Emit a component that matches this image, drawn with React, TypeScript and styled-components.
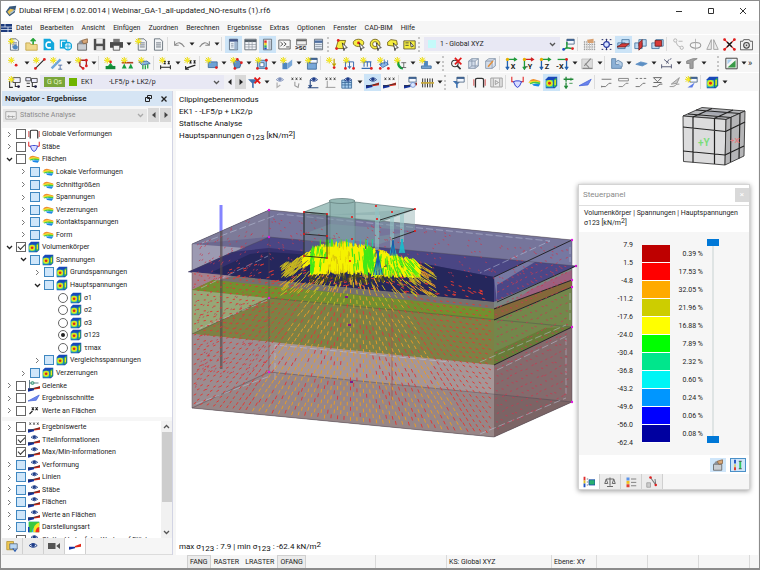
import React, { ReactNode } from "react";
import styled, { createGlobalStyle } from "styled-components";

const GlobalStyle = createGlobalStyle`
  * { box-sizing: border-box; }
  html, body, #root { height: 100%; margin: 0; }
  body { font-family: Roboto, "Noto Sans", sans-serif; font-size: 7px; line-height: 12px; color: #1d1d1d; }
  button, input, select { font: inherit; color: inherit; margin: 0; padding: 0; }
  svg { display: block; }
  sub, sup { font-size: 1em; line-height: 0; }
  sub { vertical-align: -2px; }
  sup { vertical-align: 2px; }
`;

/* ---------- window frame ---------- */

const Window = styled.div`
  display: flex;
  flex-direction: column;
  height: 100vh;
  background: #f6f6f6;
  border: 1px solid #8c8c8c;
  border-width: 1px 1px 2px 1px;
  overflow: hidden;
`;

const TitleBar = styled.header`
  display: flex;
  align-items: center;
  flex: 0 0 20px;
  padding-left: 4px;
  background: #fff;
`;

const Title = styled.h1`
  flex: 1;
  margin: 0 0 0 2px;
  font-size: 8px;
  font-weight: 400;
`;

const CaptionButton = styled.button`
  display: grid;
  place-items: center;
  width: 32px;
  height: 18px;
  border: 0;
  background: none;
`;

const MenuBar = styled.nav`
  display: flex;
  align-items: center;
  flex: 0 0 13px;
`;

const MenuLink = styled.button`
  padding: 0 4px;
  border: 0;
  background: none;
  white-space: nowrap;
`;

/* ---------- toolbars ---------- */

const ToolBar = styled.div`
  display: flex;
  align-items: center;
  flex: 0 0 19px;
  padding-left: 5px;
  border-top: 1px solid #fff;
  overflow: hidden;
`;

const ToolButton = styled.button<{ $on?: boolean }>`
  display: grid;
  place-items: center;
  flex: 0 0 17px;
  height: 17px;
  border: 0;
  background: ${(p) => (p.$on ? "#cce4f7" : "none")};
`;

const DropButton = styled.button`
  display: grid;
  place-items: center;
  flex: 0 0 8px;
  height: 17px;
  border: 0;
  background: none;
`;

const Separator = styled.span`
  flex: 0 0 4px;
  height: 14px;
  border-left: 1px solid #dcdcdc;
`;

const Handle = styled.span`
  flex: 0 0 6px;
  height: 15px;
  border-left: 2px dotted #c6c6c6;
`;

const Spacer = styled.span`
  flex: 0 0 9px;
`;

const More = styled.button`
  border: 0;
  background: none;
  font-size: 9px;
`;

const ComboBox = styled.label<{ $width: number }>`
  display: flex;
  align-items: center;
  flex: 0 1 ${(p) => p.$width}px;
  gap: 4px;
  height: 14px;
  padding: 0 4px;
  background: #e8e8f4;
`;

const Select = styled.select`
  flex: 1;
  min-width: 0;
  border: 0;
  background: none;
  appearance: none;
`;

const Swatch = styled.span<{ $color: string }>`
  width: 8px;
  height: 8px;
  background: ${(p) => p.$color};
`;

const Tag = styled.span`
  padding: 0 3px;
  background: #7aa63a;
  color: #e6f6c8;
  line-height: 10px;
  white-space: nowrap;
`;

const CaseName = styled.span`
  width: 24px;
`;

const StepButton = styled.button<{ $shade?: boolean }>`
  display: grid;
  place-items: center;
  flex: 0 0 11px;
  height: 14px;
  border: 0;
  background: ${(p) => (p.$shade ? "#d9d9d9" : "#f0f0f4")};
`;

/* ---------- navigator ---------- */

const Body = styled.main`
  display: flex;
  flex: 1;
  min-height: 0;
`;

const Navigator = styled.aside`
  display: flex;
  flex-direction: column;
  flex: 0 0 172px;
  min-width: 0;
  padding-left: 1px;
  border-right: 1px solid #d2d4e4;
`;

const PanelHead = styled.div`
  display: flex;
  align-items: center;
  flex: 0 0 15px;
  gap: 6px;
  padding: 0 4px 0 3px;
  background: #d6e5f4;
`;

const PanelTitle = styled.h2`
  flex: 1;
  margin: 0;
  font-size: 8px;
  font-weight: 600;
`;

const PlainButton = styled.button`
  display: grid;
  place-items: center;
  width: 9px;
  height: 11px;
  border: 0;
  background: none;
`;

const CaseBar = styled.div`
  display: flex;
  align-items: center;
  flex: 0 0 22px;
  gap: 1px;
  padding: 0 1px 4px 1px;
  color: #8b8b8b;
`;

const CaseBox = styled.label`
  display: flex;
  align-items: center;
  flex: 1;
  gap: 3px;
  height: 13px;
  padding: 0 3px 0 2px;
  background: #e6e6e6;
`;

const Tree = styled.div`
  display: grid;
  grid-auto-rows: 1fr;
  flex: 1;
  min-height: 0;
  min-width: 0;
  background: #fff;
`;

const LowerPane = styled.div`
  display: flex;
  flex: 0 0 117px;
  margin-top: 4px;
  overflow: hidden;
  background: #fff;
`;

const LowerTree = styled(Tree)`
  height: 125px;
`;

const ScrollBar = styled.div`
  display: flex;
  flex-direction: column;
  align-items: center;
  flex: 0 0 11px;
  background: #f1f1f1;
`;

const ScrollThumb = styled.div`
  width: 10px;
  height: 70px;
  margin-bottom: auto;
  background: #cdcdcd;
`;

const TreeRow = styled.div<{ $level: number }>`
  display: flex;
  align-items: center;
  min-width: 0;
  min-height: 0;
  padding-left: ${(p) => 2 + p.$level * 14}px;
  overflow: hidden;
`;

const Toggle = styled.button`
  display: grid;
  place-items: center;
  flex: 0 0 10px;
  height: 10px;
  margin-right: 2px;
  border: 0;
  background: none;
`;

const TreeLabel = styled.label`
  display: flex;
  align-items: center;
  gap: 2px;
  white-space: nowrap;
`;

const Check = styled.input<{ $partial?: boolean }>`
  display: grid;
  place-items: center;
  width: 10px;
  height: 10px;
  appearance: none;
  border: 1px solid ${(p) => (p.$partial ? "#3f87c0" : "#666")};
  background: ${(p) => (p.$partial ? "#cfe6fa" : "#fff")};
  &[type="radio"] { border-radius: 50%; }
  &[type="radio"]:checked::after {
    content: "";
    width: 4px;
    height: 4px;
    border-radius: 50%;
    background: #222;
  }
  &[type="checkbox"]:checked::after {
    content: "";
    width: 6px;
    height: 3px;
    margin-bottom: 2px;
    border: solid #333;
    border-width: 0 0 1px 1px;
    transform: rotate(-45deg);
  }
`;

const TabStrip = styled.div`
  display: flex;
  flex: 0 0 17px;
  border-bottom: 1px solid #dcdcdc;
`;

const Tab = styled.button<{ $active?: boolean }>`
  display: grid;
  place-items: center;
  flex: 0 0 21px;
  border: 0;
  border-right: 1px solid #d0d0d0;
  background: ${(p) => (p.$active ? "#fff" : "#ececec")};
`;

/* ---------- view and control panel ---------- */

const View = styled.section`
  position: relative;
  flex: 1;
  min-width: 0;
  margin-left: 3px;
  margin-right: 1px;
  background: #fff;
  overflow: hidden;
`;

const Scene = styled.svg`
  width: 100%;
  height: 100%;
`;

const Overlay = styled.div<{ $bottom?: boolean }>`
  position: absolute;
  left: 3px;
  ${(p) => (p.$bottom ? "bottom: 2px;" : "top: 3px;")}
  font-size: 8px;
  color: #111;
  p { margin: 0; }
`;

const Floating = styled.aside`
  position: absolute;
  top: 93px;
  right: 8px;
  display: flex;
  flex-direction: column;
  width: 172px;
  background: #fff;
  border: 1px solid #d4d4d4;
  box-shadow: 0 1px 5px rgba(0, 0, 0, 0.4);
`;

const FloatHead = styled.div`
  display: flex;
  align-items: center;
  justify-content: space-between;
  height: 21px;
  padding-left: 4px;
  border-bottom: 1px solid #dedede;
  color: #8a8a8a;
  font-size: 8px;
`;

const CloseBox = styled.button`
  width: 14px;
  height: 14px;
  border: 0;
  background: #d9d9d9;
  color: #fff;
  line-height: 12px;
`;

const FloatCaption = styled.div`
  height: 26px;
  padding: 2px 5px;
  line-height: 10px;
  white-space: nowrap;
`;

const Legend = styled.div`
  display: grid;
  grid-template-columns: 54px 37px 33px 1fr;
  height: 223px;
  padding-top: 4px;
  background: #f6f6f6;
`;

const Bounds = styled.ol`
  margin: 0;
  padding: 0;
  list-style: none;
  text-align: right;
  white-space: nowrap;
  li { height: 18px; line-height: 18px; }
`;

const Bands = styled.div`
  padding: 9px 0 0 9px;
`;

const Band = styled.div<{ $color: string }>`
  height: 18px;
  border-bottom: 1px solid #fff;
  background: ${(p) => p.$color};
`;

const Shares = styled(Bounds)`
  padding-top: 9px;
`;

const Sliders = styled.div`
  display: flex;
  flex-direction: column;
  padding: 3px 0 0 4px;
`;

const Range = styled.input`
  display: block;
  width: 12px;
  height: 102px;
  appearance: none;
  writing-mode: vertical-lr;
  direction: rtl;
  background: linear-gradient(#dfe4e4, #dfe4e4) center / 2px 100% no-repeat;
  &::-webkit-slider-thumb {
    appearance: none;
    width: 12px;
    height: 7px;
    background: #0078d7;
  }
`;

const FloatTools = styled.div`
  display: flex;
  align-items: center;
  justify-content: flex-end;
  gap: 4px;
  height: 19px;
  padding-right: 3px;
`;

const FloatTool = styled.button<{ $framed?: boolean }>`
  display: grid;
  place-items: center;
  width: 16px;
  height: 14px;
  border: 1px solid ${(p) => (p.$framed ? "#4a90c8" : "#cfe6fa")};
  background: #cfe6fa;
`;

const FloatTabs = styled(TabStrip)`
  flex: 0 0 15px;
  background: #f6f6f6;
  border: 0;
`;

/* ---------- status bar ---------- */

const StatusBar = styled.footer`
  display: grid;
  grid-template-columns: 188px 71px 105px 45px 51px 51px 51px 1fr;
  flex: 0 0 13px;
  padding-left: 186px;
`;

const StatusCell = styled.div`
  display: flex;
  align-items: center;
  padding-left: 2px;
  border-left: 1px solid #dadada;
  white-space: nowrap;
`;

const SnapCell = styled.div`
  display: flex;
`;

const Snap = styled.button<{ $on?: boolean }>`
  padding: 0 2px;
  border: 1px solid ${(p) => (p.$on ? "#d0d0d0" : "transparent")};
  border-bottom: 0;
  background: ${(p) => (p.$on ? "#ebebeb" : "none")};
`;

/* ---------- icons ---------- */

const Star = () => (
  <g>
    <path d="M4 0v8M0 4h8M1 1l6 6M7 1l-6 6" stroke="#e8d800" strokeWidth="1.2" />
    <circle cx="4" cy="4" r="1.6" fill="#f8ee20" />
  </g>
);
const Dot = ({ x, y, c = "#e02020" }: { x: number; y: number; c?: string }) => <circle cx={x} cy={y} r="1.7" fill={c} />;
const Eye = () => (
  <g>
    <path d="M4 4.5Q8.5 0 13 4.5Q8.5 8.5 4 4.5Z" fill="#e8edf8" stroke="#26458c" strokeWidth="1.1" />
    <circle cx="8.5" cy="4" r="2.1" fill="#1c3c88" />
  </g>
);
const Wedge = () => (
  <g>
    <path d="M0 11h8v2.500l-8 2Z" fill="#1230a0" />
    <path d="M16 8l-8 2.500v2l8-1Z" fill="#e02818" />
    <path d="M0 12.500L16 9.500" stroke="#333" />
  </g>
);
const Crosses = () => <path d="M2 2l2 3M4 2l-2 3M7 2l2 3M9 2l-2 3M12 2l2 3M14 2l-2 3" stroke="#333" strokeWidth="1" />;
const Arrow = ({ d, c }: { d: string; c: string }) => <path d={d} stroke={c} strokeWidth="1.6" fill="none" />;
const Axes = ({ a, b, c }: { a: string; b: string; c: string }) => (
  <g>
    <Arrow d="M2 3h12M11 1l3 2-3 2" c={a} />
    <Arrow d="M3 3v12M1 12l2 3 2-3" c={b} />
    <circle cx="3" cy="3" r="2" fill="#e8b000" />
    <text x="7" y="15" fontSize="9" fontWeight="700" fill="#222">{c}</text>
  </g>
);
const Doc = ({ x = 0 }: { x?: number }) => (
  <path d={`M${3 + x} 1h7l3 3v11h-10Z M${5 + x} 6h6M${5 + x} 8.500h6M${5 + x} 11h6`} fill="#f1f3f5" stroke="#59636e" />
);
const Win = () => (
  <g>
    <path d="M6 1.500h9v6H6Z" fill="#f4f8ff" stroke="#496281" />
    <path d="M6 1.500h9v2H6Z" fill="#2d5486" />
  </g>
);

const icons: Record<string, ReactNode> = {
  newModel: <><Doc /><path d="M6 10l3-2 3 2v3l-3 1-3-1Z" fill="#4d86c0" /><Star /></>,
  open: <><path d="M1 6h5l1 2h8v7H1Z" fill="#efd88c" stroke="#c0a040" /><path d="M10 8V1M7 4l3-3 3 3" stroke="#27a33a" strokeWidth="2" fill="none" /></>,
  dlubal: <><path d="M2 1h8l5 5v9H2Z" fill="#12a8dc" /><path d="M11 5.500Q5 4 5 8.500T11 12" stroke="#fff" strokeWidth="2" fill="none" /></>,
  cloud: <><path d="M1 2h9v11H1Z" fill="#12a8dc" /><path d="M3 4h5M3 4v7" stroke="#fff" strokeWidth="1.500" /><circle cx="11" cy="10" r="4.500" fill="#d5f1fb" stroke="#12a8dc" strokeWidth="1.500" /><path d="M7 10h8M11 6v8" stroke="#12a8dc" /></>,
  archive: <><path d="M2 7h11v8H2Z" fill="#c9cdd2" stroke="#555" /><path d="M2 7l3-4h8v4Z" fill="#89919b" /><path d="M7 3l7-2v5l-5 1Z" fill="#d8a878" stroke="#846040" /></>,
  save: <><path d="M1 1h14v14H1Z" fill="#4f4f4f" /><path d="M4 1h8v6H4Z" fill="#eee" /><path d="M4 10h8v5H4Z" fill="#ddd" /></>,
  print: <><path d="M4 1h8v4H4Z" fill="#777" /><path d="M0 5h16v7H0Z" fill="#4c4c4c" /><path d="M4 9h8v6H4Z" fill="#f0f0f0" stroke="#454545" /></>,
  newDoc: <><Doc x={1} /><Star /></>,
  doc: <Doc />,
  undo: <path d="M2 4v5h5M2 9q6-7 12 2" stroke="#888" strokeWidth="1.300" fill="none" />,
  redo: <path d="M14 4v5H9M14 9q-6-7-12 2" stroke="#888" strokeWidth="1.300" fill="none" />,
  panel: <><path d="M3 1.500h10v13H3Z" fill="#e8f0f8" stroke="#4f6070" /><path d="M3 1.500h10v3H3Z" fill="#3f5488" /><path d="M9 5h4v9H9Z" fill="#9cb4d0" /><path d="M5 7h3M5 9h3M5 11h3" stroke="#8a95a5" /></>,
  table: <><path d="M1 1.500h14v13H1Z" fill="#f2f4f8" stroke="#56606a" /><path d="M1 2h14v3H1Z" fill="#56606a" /><path d="M1 8h14M1 11h14M6 4v10M10 4v10" stroke="#8a929a" strokeWidth=".8" /></>,
  legend: <><path d="M3 1.500h10v13H3Z" fill="#eef2f8" stroke="#56606a" /><path d="M4 3h3v3H4Z" fill="#e03030" /><path d="M4 6h3v3H4Z" fill="#eed020" /><path d="M4 9h3v3H4Z" fill="#30b060" /><path d="M4 12h3v2H4Z" fill="#2050d0" /><path d="M9 3h3v11H9Z" fill="#b0bccc" /></>,
  console: <><path d="M1 2.500h14v11H1Z" fill="#f8f8f8" stroke="#4a4a4a" /><path d="M3 5l3 2.500L3 10M7 5l3 2.500L7 10M10 11h4" stroke="#333" fill="none" /></>,
  script: <><path d="M2 1.500h12v7H2Z" fill="#eee" stroke="#666" /><path d="M2 2h12v2H2Z" fill="#666" /><text x="0" y="15" fontSize="9" fontWeight="700" fill="#333">&gt;sc</text></>,
  list: <><path d="M3 1.500h10v13H3Z" fill="#dfe7f0" stroke="#56606a" /><path d="M3 3h10v3H3Z" fill="#4f6fa0" /><path d="M4 8h8M4 10.500h8M4 13h8" stroke="#8a95a5" /></>,
  selA: <><path d="M4 3h9l-3 10H1Z" fill="#f6ee40" stroke="#6b5a10" /><Dot x={4} y={3} /><Dot x={2} y={13} /><path d="M9 6l6 6-3 .5-1 3Z" fill="#fff" stroke="#222" /></>,
  selB: <><ellipse cx="8" cy="6" rx="6.500" ry="4.500" fill="#f6ee40" stroke="#6b5a10" /><Dot x={8} y={6} /><path d="M9 6l6 6-3 .5-1 3Z" fill="#fff" stroke="#222" /></>,
  selC: <><circle cx="7.500" cy="7.500" r="6" fill="#f6ee40" stroke="#6b5a10" /><circle cx="7.500" cy="7.500" r="3" fill="#fff" stroke="#6b5a10" /><path d="M9 6l6 6-3 .5-1 3Z" fill="#fff" stroke="#222" /></>,
  selD: <><path d="M2 5l4-3 7 1 1 5-4 2-8-1Z" fill="#f6ee40" stroke="#6b5a10" /><path d="M9 6l6 6-3 .5-1 3Z" fill="#fff" stroke="#222" /></>,
  selE: <><path d="M1 3.500h14v10H1Z" fill="#f6ee40" stroke="#55502a" /><path d="M3 6h4M3 9h4M9 5l4 5-3 1Z" stroke="#333" fill="#fff" /></>,
  csys: <><Win /><path d="M6 12V5M6 12l6 1M6 12l-4 2" stroke="#1f9a3a" strokeWidth="1.800" /><Dot x={13} y={13} /><Dot x={2} y={14} c="#2050c0" /></>,
  gridHand: <><path d="M2 4v11M5 4v11M8 4v11M11 4v11M14 4v11M1 5h14M1 8h14M1 11h14M1 14h14" stroke="#8a8a8a" strokeWidth=".9" strokeDasharray="1.500 1" /><path d="M5 2l8-1v5H6Z" fill="#d8a070" /></>,
  snap: <><path d="M2 2h2M7 2h2M12 2h2M2 14h2M7 14h2M12 14h2M1 8h14M8 1v14" stroke="#28306a" strokeWidth="1.200" /><circle cx="8" cy="8" r="3.500" fill="#d8e4ff" stroke="#2838a0" strokeWidth="1.400" /></>,
  planeA: <><path d="M1 6h9v7H1ZM6 2h9v8H6Z" fill="#bcd9f2" stroke="#3f709c" /><path d="M0 11l6-4h9l-5 4Z" fill="#d83a38" stroke="#702020" /></>,
  planeB: <><path d="M1 6h9v7H1ZM6 2h9v8H6Z" fill="#bcd9f2" stroke="#3f709c" /><path d="M6 6l4-4v9l-4 4Z" fill="#d83a38" stroke="#702020" /></>,
  planeC: <><path d="M1 6h9v7H1ZM6 2h9v8H6Z" fill="#bcd9f2" stroke="#3f709c" /><path d="M5 3h8v7H5Z" fill="#d83a38" stroke="#702020" /></>,
  move: <><circle cx="4" cy="3" r="2" fill="none" stroke="#aaa" /><circle cx="12" cy="12" r="2" fill="none" stroke="#aaa" /><path d="M5 5q1 5 5 6M8 4h5" stroke="#aaa" fill="none" /></>,
  rotate: <><ellipse cx="8" cy="9" rx="6.500" ry="3.500" fill="none" stroke="#999" strokeWidth="1.300" /><path d="M8 1v14" stroke="#aaa" /></>,
  mirror: <path d="M6.500 2v12H1ZM9.500 2v12H15Z" fill="#eee" stroke="#999" />,
  erase: <><path d="M1 1l14 14M15 1L1 15" stroke="#d82020" strokeWidth="1.300" /><path d="M5 5l6 6M11 5l-6 6" stroke="#111" strokeWidth="1.600" /><Dot x={2} y={2} /><Dot x={14} y={2} /><Dot x={2} y={14} /><Dot x={14} y={14} /></>,
  camera: <><path d="M0.500 4h3l1-2h7l1 2h3v10.500H.5Z" fill="#f2f2f2" stroke="#444" /><circle cx="8" cy="9" r="3.500" fill="#ddd" stroke="#444" strokeWidth="1.300" /><circle cx="8" cy="9" r="1" fill="#444" /></>,

  node: <><Star /><Dot x={10} y={10} /></>,
  line: <><path d="M3 14L14 3" stroke="#222" strokeWidth="1.300" /><Dot x={3} y={14} /><Dot x={14} y={3} /><Star /></>,
  member: <><path d="M2 14L13 3" stroke="#6fa6da" strokeWidth="3" /><path d="M10 10h5M10 15h5M12.500 10v5" stroke="#3b5f9a" /><Star /></>,
  poly: <><path d="M6 4h8v7M6 4v7l4 3" stroke="#a02020" strokeWidth="1.600" fill="none" /><Dot x={14} y={4} /><Dot x={14} y={11} /><Dot x={10} y={14} /><Star /></>,
  support: <><path d="M8 7l3 4H5Z" fill="#17a040" /><path d="M2 11h12v4H2Z" fill="#128a38" /><Dot x={8} y={6} /><Star /></>,
  support2: <><path d="M1 7h14" stroke="#b04020" strokeWidth="2" /><path d="M4 8l3 6H1ZM12 8l3 6H9Z" fill="#17a040" /><Star /></>,
  support3: <><path d="M1 6l10-1 4 3-10 2Z" fill="#8cb8e4" stroke="#3b6898" /><path d="M6 10v5M9 10v5M12 9v5" stroke="#17a040" strokeWidth="1.500" /><Star /></>,
  dim: <><path d="M2 10v5M14 10v5M2 12.500h12M6 5l2 4M8 5l-2 4M11 5l2 4M13 5l-2 4" stroke="#222" strokeWidth="1.300" /><Star /></>,
  dimX: <><path d="M2 14L14 10M2 11v4h4M7 4l2 4M9 4l-2 4M12 4l2 4M14 4l-2 4" stroke="#222" fill="none" strokeWidth="1.300" /><Star /></>,
  surf: <><path d="M4 6h11v7H4Z" fill="#6ea2d4" stroke="#386696" /><Dot x={14} y={13} /><Star /></>,
  solid: <><path d="M4 6l5-3 5 4-2 6-6 1Z" fill="#5e92c6" stroke="#2d5988" /><Dot x={9} y={3} /><Dot x={14} y={7} /><Dot x={6} y={14} /><Star /></>,
  opening: <><path d="M3 4h11v10H3Z" fill="#9cc4ea" stroke="#386696" /><path d="M6 7h5v5H6Z" fill="#fff" stroke="#386696" /><Dot x={3} y={14} /><Dot x={14} y={4} /><Dot x={14} y={14} /><Star /></>,
  joint: <><path d="M3 7h6v8H3Z" fill="#4d86c0" /><path d="M9 8l6-5v7l-6 5Z" fill="#79a8d8" /><Star /></>,
  setBox: <><path d="M3 7h11v8H3Z" fill="#79a8d8" stroke="#386696" /><Win /><Star /></>,
  load: <><path d="M10 2v9M8 8l2 3 2-3" stroke="#c0a000" strokeWidth="1.500" fill="none" /><Dot x={10} y={13} /><Star /></>,
  loadA: <><path d="M3 14V6h10v8M8 6v8M6 11l2 3 2-3" stroke="#3b6cb0" fill="none" strokeWidth="1.200" /><Dot x={3} y={14} /><Dot x={13} y={14} /><Star /></>,
  loadB: <><path d="M3 6h11M5 6v6M9 6v6M13 6v6M2 14h12" stroke="#3b6cb0" strokeWidth="1.300" /><Dot x={14} y={14} /><Star /></>,
  loadC: <><path d="M3 9l8-3 3 3-7 4Z" fill="#8cb8e4" stroke="#3b6cb0" /><path d="M5 4v6M9 3v6M13 4v6" stroke="#3b6cb0" /><Dot x={4} y={14} /><Dot x={14} y={14} /><Star /></>,
  loadD: <><path d="M5 5q0 9 6 9" stroke="#17a040" strokeWidth="3" fill="none" /><path d="M9 7h6M12 7v6M9 13h6" stroke="#555" /><Star /></>,
  loadE: <><path d="M3 11h12v3H3Z" fill="#79a8d8" stroke="#386696" /><path d="M6 5h5v6H6Z" fill="#4d86c0" /><Star /></>,
  find: <><circle cx="6" cy="8" r="4" fill="none" stroke="#333" strokeWidth="1.300" /><path d="M9 11l4 4" stroke="#333" strokeWidth="2" /><path d="M6 1l8 8M14 1L6 9" stroke="#e01818" strokeWidth="2" /></>,
  wire: <path d="M2 5h8v9H2ZM2 5l4-3h8l-4 3M14 2v9l-4 3M6 2v9M2 14l4-3h8" fill="#d2dcea" stroke="#8292a8" />,
  wireEdit: <><path d="M2 5h8v9H2ZM2 5l4-3h8l-4 3M14 2v9l-4 3" fill="#d2dcea" stroke="#8292a8" /><path d="M5 12l6-7" stroke="#e09040" strokeWidth="2" /></>,
  axX: <Axes a="#1f9a3a" b="#2060b0" c="X" />,
  axY: <><Axes a="#d02020" b="#1f9a3a" c="Y" /><path d="M4 12h3" stroke="#222" /></>,
  axZ: <Axes a="#1f9a3a" b="#2060b0" c="Z" />,
  axMX: <><Arrow d="M2 3h11" c="#1f9a3a" /><Arrow d="M13 3v12M11 12l2 3 2-3" c="#2060b0" /><Dot x={13} y={3} /><text x="0" y="15" fontSize="9" fontWeight="700" fill="#222">-X</text></>,
  edit: <><path d="M1 2.500h13v12H1Z" fill="#ddd" stroke="#bbb" /><path d="M4 11l8-9M2 14h12M5 8l5 5" stroke="#888" strokeWidth="1.300" /></>,
  block: <><path d="M2 2h5v7h7v5H2Z" fill="#8bb0d6" stroke="#5a80a8" /><path d="M7 6l3-2 5 3v5" fill="#b8d0e8" stroke="#5a80a8" /></>,
  plate: <path d="M1 9l6-3 8 2-6 3Z" fill="#5c8fc4" stroke="#5c8fc4" />,
  dimGray: <path d="M2 9v5M14 9v5M2 12h12M5 3l6 5M11 3L8 8M12 3l2-1" stroke="#5a5f78" strokeWidth="1.200" />,
  beam: <path d="M2 5l8-3h5l-5 3v9H6V8H2Z" fill="#a0a0a0" stroke="#808080" />,
  chart: <><path d="M1 1.500h14v13H1Z" fill="#f5f5f5" stroke="#444" strokeWidth="1.200" /><path d="M3 13L13 4v9Z" fill="#3a9a48" /><path d="M3 3h6L3 9Z" fill="#a9cff0" /></>,

  caseNew: <><path d="M6 2h9v6H6Z" fill="#eef" stroke="#333" /><path d="M9 8v5h5M2 6v8h4" stroke="#333" strokeWidth="1.300" fill="none" /><Dot x={13} y={13} c="#224" /><Star /></>,
  caseAll: <><path d="M1 2h6v4H1ZM8 3h7v5H8Z" fill="#eef" stroke="#333" /><path d="M9 8v5h5M2 9h4M2 13h4" stroke="#333" strokeWidth="1.300" fill="none" /><Dot x={13} y={13} c="#224" /></>,
  filterX: <><path d="M0 4h11l-4 5v6l-2-1V9Z" fill="#3f72b0" /><path d="M8 2l7 7M15 2L8 9" stroke="#e01818" strokeWidth="2.200" /></>,
  eyeA: <g opacity=".55"><Eye /><path d="M5 8v6l4-3" stroke="#777" strokeWidth="1.500" fill="none" /></g>,
  eyeB: <><Crosses /><path d="M6 7v5l4 2 1-5" stroke="#999" strokeWidth="1.300" fill="none" /></>,
  eyeC: <><Eye /><path d="M4 5v9M1 14.500h13M2 11l2 3 2-3" stroke="#2a4a80" fill="none" strokeWidth="1.300" /></>,
  eyeD: <><Crosses /><path d="M4 6v8M2 14h12" stroke="#888" fill="none" /></>,
  eyeGrid: <><path d="M1 5h12v10H1Z" fill="#a9cff0" stroke="#386696" /><path d="M1 8h12M1 11h12M5 5v10M9 5v10" stroke="#386696" /><Eye /></>,
  eyeWedge: <><Wedge /><Eye /></>,
  xWedge: <><Wedge /><Crosses /></>,
  wedge: <><path d="M0 9h8v2l-8 2Z" fill="#1230a0" /><path d="M16 5L8 8v2l8-1Z" fill="#e02818" /></>,
  winWedge: <><Wedge /><Win /><circle cx="11" cy="11" r="3" fill="#dce8ff" stroke="#6a90d8" /></>,
  grid3: <><path d="M2 3v11M5 3v11M8 3v11M11 3v11M14 3v11" stroke="#333" strokeWidth="1.200" /><path d="M0 8.500h16" stroke="#c8a838" strokeWidth="2" /></>,
  filterWin: <><path d="M1 6h10l-4 4v5l-2-1v-4Z" fill="#3f72b0" /><Win /></>,
  frame: <><path d="M3 14V5q0-2 2-2h6q2 0 2 2v9" stroke="#333" strokeWidth="1.600" fill="none" /><path d="M1 12V4M15 12V4" stroke="#d03030" /></>,
  film: <path d="M1 2.500h14v11H1ZM4 3v10M12 3v10M6.500 5.500l4 2.500-4 2.500Z" fill="#eee" stroke="#909090" />,
  uCurve: <><path d="M1 1v6h3M15 1v6h-3" stroke="#e02020" strokeWidth="1.300" fill="none" /><path d="M3 7q5 14 10 0l-3-1H6Z" fill="#d9dcff" stroke="#3040d0" strokeWidth="1.200" /></>,
  rainbow: <><path d="M1 7Q4 3 8 4l7 2v2L8 6Z" fill="#f09030" /><path d="M0 8Q6 4 15 7v1H8L4 9Z" fill="#f4e020" /><path d="M2 9q6-3 13-1v2l-8-1-4 1Z" fill="#40c850" /><path d="M5 10q5-1 10 0l-2 3-6-1Z" fill="#1888e8" /></>,
  cube: <><path d="M1 4l3-3h11v11l-3 3H1Z" fill="#1848b8" /><path d="M1 5h9v9H1Z" fill="#28b8b0" /><circle cx="5.500" cy="9" r="4" fill="#d8e820" /><circle cx="5.500" cy="9" r="1.800" fill="#e02818" /><path d="M11 5l3-3v10l-3 2Z" fill="#38c848" /><path d="M12.500 5v6" stroke="#f0e820" strokeWidth="1.600" /></>,
  plus: <><path d="M5 1v6M2 4h6M8 4h6M5 8v6M3 12l2 3 2-3" stroke="#228838" strokeWidth="1.600" fill="none" /><path d="M11 2v4M9 9h4" stroke="#228838" /></>,
  section: <path d="M0 12L15 4l-4 7Z" fill="#6b85ee" stroke="#4b68d8" />,
  diagA: <path d="M2 4h12M2 13h5l4-4h3M2 12v2" stroke="#777" strokeWidth="1.200" fill="none" />,
  diagB: <path d="M2 3h12v3H2ZM2 13h5l4-4h3" stroke="#888" strokeWidth="1.200" fill="none" />,
  diagC: <path d="M2 3h3M7 3h3M12 3h3M2 13h5l4-4h3" stroke="#777" strokeWidth="1.200" fill="none" />,
  diagD: <path d="M3 2h10M3 2l5 5 5-5M3 8h10M2 13h5l4-3h3" stroke="#666" strokeWidth="1.200" fill="none" />,
  diagE: <path d="M4 10l10-8-3 7ZM2 13h5l4-3h3" stroke="#999" strokeWidth="1.200" fill="#ccc" />,
  diagF: <><Win /><path d="M3 14l9-6-3 6Z" fill="#5b7be8" /><Star /></>,
  hinge: <><path d="M2 0v11M2 4h12" stroke="#356" /><circle cx="6" cy="4" r="2" fill="#9fd0c0" stroke="#286" /><Wedge /></>,
  valXX: <path d="M5 3l3 4M8 3L5 7M10 3l3 4M13 3l-3 4M2 12L6 8" stroke="#222" strokeWidth="1.500" />,
  render: <><path d="M1 1h14v14H1Z" fill="#28b8e8" /><path d="M1 1h14v5Q6 7 5 15H1Z" fill="#38c840" /><path d="M15 2v13H7Q7 4 15 2Z" fill="#f4e820" /><path d="M15 8v7h-5Q10 9 15 8Z" fill="#f03020" /><path d="M1 15V8" stroke="#183fc0" strokeWidth="2" /></>,
  image: <><path d="M1 3.500h14v10H1Z" fill="#eee" stroke="#999" /><path d="M3 10h10M5 12V8M10 12V9" stroke="#999" /></>,
  folder: <><path d="M1 2h9v11H1Z" fill="#f0c850" stroke="#b09030" /><path d="M5 5h10v7H5Z" fill="#b9d6f2" stroke="#567" /><path d="M9 11l3 4 2-3" stroke="#3060b0" strokeWidth="1.600" fill="none" /></>,
  eye: <g transform="translate(-2 2) scale(1.200)"><Eye /></g>,
  video: <path d="M0 4h10v8H0ZM11 8l5-4v8Z" fill="#555" />,
  scale: <path d="M8 2v11M4 14h8M3 4h10M3 4L1 10h4ZM13 4l-2 6h4Z" fill="none" stroke="#666" strokeWidth="1.300" />,
  bars: <><path d="M2 2h4v4H2Z" fill="#5b93e8" /><path d="M2 6.500h4v4H2Z" fill="#f0c020" /><path d="M2 11h4v4H2Z" fill="#e04030" /><path d="M8 4h7M8 8.500h7M8 13h7" stroke="#777" strokeWidth="1.200" /></>,
  legendCube: <><path d="M2 1v5" stroke="#e03030" strokeWidth="2.500" /><path d="M2 6v4" stroke="#e0c020" strokeWidth="2.500" /><path d="M2 10v5" stroke="#2050c0" strokeWidth="2.500" /><path d="M5 4h2M5 8h2M5 12h2" stroke="#555" /><path d="M8 5h8v7H8Z" fill="#28b070" stroke="#1840b0" /></>,
  probe: <><path d="M1 9h5v6H1Z" fill="#ccc" stroke="#999" /><path d="M6 2l7 10M12 4l1 8" stroke="#777" strokeWidth="1.400" /><Dot x={6} y={2} /><Dot x={13} y={12} /></>,
  gauges: <><path d="M4 1v5" stroke="#2050c0" strokeWidth="2.500" /><path d="M4 7v4" stroke="#e0c020" strokeWidth="1.500" /><path d="M4 11v4" stroke="#e03020" strokeWidth="2.500" /><path d="M11 3v10" stroke="#30c860" strokeWidth="2.500" /><path d="M9 3h4M9 13h4" stroke="#333" /></>,
  logo: <><path d="M1 9l5-7 9-1-2 9-7 5Z" fill="#39597c" /><path d="M3 9l4-4 5 1-2 4-4 3Z" fill="#e6c258" /><path d="M7 11l6-4" stroke="#a8c4dc" strokeWidth="1.500" /></>,
};

const Icon = ({ name, size = 14 }: { name: string; size?: number }) => (
  <svg width={size} height={size} viewBox="0 0 16 16" fill="none" aria-hidden="true">{icons[name]}</svg>
);

const Caret = ({ dir, color = "#222" }: { dir: "down" | "left" | "right"; color?: string }) => (
  <svg width="6" height="6" viewBox="0 0 6 6" aria-hidden="true">
    <path d={dir === "down" ? "M.5 1.500h5l-2.500 3Z" : dir === "left" ? "M4.500 0v6L1 3Z" : "M1.500 0v6L5 3Z"} fill={color} />
  </svg>
);

const Chevron = ({ dir, color = "#555" }: { dir: "down" | "right" | "up"; color?: string }) => (
  <svg width="7" height="7" viewBox="0 0 7 7" fill="none" aria-hidden="true">
    <path
      d={dir === "down" ? "M1 2L3.500 4.500 6 2" : dir === "up" ? "M1 5L3.500 2.500 6 5" : "M2 1L4.500 3.500 2 6"}
      stroke={color}
      strokeWidth={dir === "right" ? 1 : 1.3}
    />
  </svg>
);

/* "v" drop arrow, "|" separator, ":" drag handle, "_" spacer, "*" marks an active tool */
const Tools = ({ spec }: { spec: string }) => (
  <>
    {spec.split(" ").map((item, i) => {
      if (item === "v") return <DropButton key={i} aria-label="Mehr"><Caret dir="down" /></DropButton>;
      if (item === "|") return <Separator key={i} />;
      if (item === ":") return <Handle key={i} />;
      if (item === "_") return <Spacer key={i} />;
      const name = item.replace("*", "");
      return <ToolButton key={i} $on={item.endsWith("*")} aria-label={name}><Icon name={name} size={13} /></ToolButton>;
    })}
  </>
);

/* ---------- tree data ---------- */

type Mark = "off" | "on" | "partial" | "radio" | "radioOn";
type Row = { level: number; open?: boolean; leaf?: boolean; mark: Mark; icon: string; text: string };
const row = (level: number, mark: Mark, icon: string, text: string, extra: Partial<Row> = {}): Row => ({ level, mark, icon, text, ...extra });
const leaf = { leaf: true };
const open = { open: true };

const resultRows: Row[] = [
  row(0, "off", "frame", "Globale Verformungen"),
  row(0, "off", "uCurve", "Stäbe"),
  row(0, "off", "rainbow", "Flächen", open),
  row(1, "partial", "rainbow", "Lokale Verformungen"),
  row(1, "partial", "rainbow", "Schnittgrößen"),
  row(1, "partial", "rainbow", "Spannungen"),
  row(1, "partial", "rainbow", "Verzerrungen"),
  row(1, "partial", "rainbow", "Kontaktspannungen"),
  row(1, "partial", "rainbow", "Form"),
  row(0, "on", "cube", "Volumenkörper", open),
  row(1, "partial", "cube", "Spannungen", open),
  row(2, "partial", "cube", "Grundspannungen"),
  row(2, "partial", "cube", "Hauptspannungen", open),
  row(3, "radio", "cube", "σ1", leaf),
  row(3, "radio", "cube", "σ2", leaf),
  row(3, "radio", "cube", "σ3", leaf),
  row(3, "radioOn", "cube", "σ123", leaf),
  row(3, "radio", "cube", "τmax", leaf),
  row(2, "partial", "cube", "Vergleichsspannungen"),
  row(1, "partial", "cube", "Verzerrungen"),
  row(0, "off", "hinge", "Gelenke"),
  row(0, "off", "section", "Ergebnisschnitte"),
  row(0, "off", "valXX", "Werte an Flächen"),
];

const displayRows: Row[] = [
  row(0, "off", "xWedge", "Ergebniswerte"),
  row(0, "on", "eyeWedge", "Titelinformationen", leaf),
  row(0, "on", "eyeWedge", "Max/Min-Informationen", leaf),
  row(0, "partial", "eyeWedge", "Verformung"),
  row(0, "partial", "eyeWedge", "Linien"),
  row(0, "partial", "eyeWedge", "Stäbe"),
  row(0, "partial", "eyeWedge", "Flächen"),
  row(0, "partial", "eyeWedge", "Werte an Flächen"),
  row(0, "partial", "render", "Darstellungsart"),
  row(0, "off", "eyeWedge", "Glatter Verlauf der Werte auf Flächen", leaf),
];

const Rows = ({ rows }: { rows: Row[] }) => (
  <>
    {rows.map((r, i) => (
      <TreeRow key={i} $level={r.level}>
        <Toggle aria-label={r.leaf ? undefined : "Aufklappen"}>
          {!r.leaf && <Chevron dir={r.open ? "down" : "right"} color={r.open ? "#222" : "#777"} />}
        </Toggle>
        <TreeLabel>
          <Check
            type={r.mark.startsWith("radio") ? "radio" : "checkbox"}
            name={r.mark.startsWith("radio") ? "stress" : undefined}
            $partial={r.mark === "partial"}
            defaultChecked={r.mark === "on" || r.mark === "radioOn"}
          />
          <Icon name={r.icon} size={12} />
          {r.text}
        </TreeLabel>
      </TreeRow>
    ))}
  </>
);

/* ---------- soil model ---------- */

let seed = 7;
const rnd = () => {
  seed = (seed * 16807) % 2147483647;
  return seed / 2147483647;
};
const n = (v: number) => v.toFixed(1);

const buildVectors = () => {
  const out: Record<string, string> = { faint: "", red: "", orange: "", gold: "", dark: "", core: "", yellow: "", green: "", cyan: "", blue: "" };
  const seg = (key: string, x: number, y: number, dx: number, dy: number) => {
    out[key] += `M${n(x - dx / 2)} ${n(y - dy / 2)}l${n(dx)} ${n(dy)}`;
  };
  for (let r = 0; r < 27; r++) {
    for (let c = 0; c < 46; c++) {
      const u = (c + (r % 2) / 2) / 46;
      const top = 274 + u * 32;
      const bottom = 408 + u * 28;
      const x = 195 + u * 298;
      const y = top + ((bottom - top) * (r + rnd() * 0.3)) / 27;
      const side = (x - 352) / (34 + (y - 262) * 0.55);
      const away = Math.abs(side);
      const len = away < 1 ? 3.8 : Math.max(1.6, 3.8 - away * 0.7);
      const ang = Math.atan2(y - 245, (x - 352) * 0.9) + (away > 1.2 ? (side > 0 ? -0.3 : 0.3) : 0);
      const key = away < 1 && y < 305 ? (rnd() < 0.6 ? "gold" : "orange") : away < 0.9 ? (rnd() < 0.7 ? "orange" : "red") : "red";
      seg(key, x, y, Math.cos(ang) * len, Math.sin(ang) * len);
    }
  }
  for (let i = 0; i < 220; i++) {
    const u = rnd();
    seg("faint", 194 + u * 74, 244 - u * 34 + rnd() * 155, 1.5, -1);
  }
  for (let r = 0; r < 20; r++) {
    for (let c = 0; c < 15; c++) {
      const u = (c + rnd() * 0.5) / 15;
      seg("faint", 496 + u * 74, 284 - u * 37 + r * 7.6 + rnd() * 2, 2, r % 2 ? -1 : 0.6);
    }
  }
  for (let i = 0; i < 200; i++) {
    const u = rnd();
    seg("faint", 270 + u * 290, 216 + u * 27 + rnd() * 45, 1.5, 0.6);
  }
  for (let i = 0; i < 110; i++) {
    const x = 225 + rnd() * 260;
    seg("red", x, 261 + (x - 225) * 0.09 + rnd() * 16, 3, x < 352 ? -1 : 1);
  }
  for (let i = 0; i < 300; i++) {
    const x = 283 + rnd() * 150;
    const dx = (x - 352) * 0.1;
    const far = Math.abs(x - 352) / 80;
    seg(rnd() < 0.5 ? "orange" : "gold", x, 256 + far * 8 + rnd() * 32, dx, 5);
  }
  for (let i = 0; i < 90; i++) {
    const t = rnd();
    seg(t > 0.7 ? "yellow" : "gold", 284 + t * 28, 266 - t * 16 + rnd() * 12, 6, -5);
  }
  for (let i = 0; i < 1100; i++) {
    const x = 311 + rnd() * 62;
    const edge = Math.abs((x - 342) / 31);
    const y = 245 + edge * 5 + rnd() * (25 - edge * 4);
    const k = rnd();
    const middle = Math.abs(x - 338) < 12;
    const key = x < 314 || x > 364 ? (k < 0.5 ? "green" : "yellow") : middle ? (k < 0.75 ? "core" : "yellow") : k < 0.82 ? "yellow" : k < 0.96 ? "core" : "green";
    seg(key, x, y, (x - 342) * 0.05, 7 + rnd() * 3);
  }
  for (let i = 0; i < 620; i++) {
    const t = rnd();
    const x = 370 + t * 48;
    const y = 250 + t * 12 + rnd() * (25 - t * 12);
    const k = rnd();
    seg(k < 0.62 ? "yellow" : k < 0.74 ? "green" : k < 0.84 ? "orange" : k < 0.96 ? "gold" : "dark", x, y, -3 + t * 9, 6);
  }
  for (let i = 0; i < 80; i++) seg("dark", 310 + rnd() * 90, 275 + rnd() * 7, (rnd() - 0.5) * 2, 4);
  for (let i = 0; i < 7; i++) {
    seg(i % 2 ? "cyan" : "blue", 378 + (i - 3) * 0.6, 263, (i - 3) * 1.8, 24);
    seg(i % 2 ? "blue" : "cyan", 393 + (i - 3) * 0.5, 248, (i - 3) * 1.2, 15);
    seg("cyan", 402 + (i - 3) * 0.4, 246, (i - 3), 14);
  }
  for (let i = 0; i < 20; i++) seg(i % 3 ? "green" : "cyan", 318 + rnd() * 55, 243, 0, 7);
  return out;
};

const vectors = buildVectors();
const vectorColors: Record<string, string> = {
  faint: "#c83850", red: "#e03a34", orange: "#e89a28", gold: "#c8b820", dark: "#4b4a1c",
  core: "#dccb08", yellow: "#f6f200", green: "#40e818", cyan: "#20b8c8", blue: "#1c58a8",
};

const nodes: [number, number][] = [[304, 212], [327, 214], [304, 234], [327, 236], [304, 256], [327, 258], [352, 217], [377, 219], [415, 209], [415, 231], [352, 239], [350, 261], [376, 206], [392, 212]];
const corners: [number, number][] = [[269, 210], [572, 240], [576, 266], [572, 280], [572, 287], [572, 327], [572, 402], [269, 372], [269, 237], [269, 298]];

const Model = () => (
  <Scene viewBox="176 91 582 464" preserveAspectRatio="xMidYMid meet" role="img" aria-label="Bodenmodell mit Hauptspannungen">
    <rect x="219.500" y="205" width="3" height="165" fill="#8484ff" />
    {/* rear walls of the soil block */}
    <path d="M192 244L269 210V372L192 408Z" fill="#9186a0" />
    <path d="M269 210L572 240V402L494 437 192 408 269 372Z" fill="#a29293" />
    <path d="M192 244L269 210 572 240 494 277Z" fill="#76759b" />
    <path d="M192 244L269 210V237L192 272Z" fill="#7d7b99" />
    <path d="M192 244L269 237 494 260V302L192 272Z" fill="#6c6990" />
    <path d="M192 244L245 248 192 272Z" fill="#9c9ab2" />
    {/* blue layer */}
    <path d="M188 272L269 237 576 266 497 302Z" fill="#4a4684" />
    <path d="M188 272L232 252 269 248 420 263 494 277V302Z" fill="#35306e" />
    <path d="M212 272L250 254 269 252 420 263 494 277V302L230 276Z" fill="#25275c" />
    {/* thin layer and olive layers */}
    <path d="M192 272L494 302V320L192 290Z" fill="#75716f" />
    <path d="M192 272L232 276 192 290Z" fill="#a4808e" />
    <path d="M192 290L213 280 494 309V320L494 365 192 334Z" fill="#7a8142" />
    <path d="M192 290L213 280 494 309V320L430 314 269 299Z" fill="#738f30" />
    <path d="M192 290L269 298 192 334Z" fill="#97a777" />
    <path d="M192 334L269 298 494 320V365Z" fill="#7d8145" />
    {/* lowest layer */}
    <path d="M192 334L494 365V437L192 408Z" fill="#a69697" />
    <path d="M192 334L269 342V372L192 408Z" fill="#9c8c90" />
    <path d="M192 408L269 372 494 395V437Z" fill="#978687" />
    {/* right wall */}
    <path d="M494 277L572 240V266L497 302Z" fill="#7678a2" />
    <path d="M497 285L535 262 576 266 497 302Z" fill="#4b4787" />
    <path d="M494 302L572 268V287L494 320Z" fill="#7b8583" />
    <path d="M530 290L572 270V281L500 310Z" fill="#9d607f" />
    <path d="M494 308L572 280V287L494 320Z" fill="#84683a" />
    <path d="M494 320L572 287V327L494 365Z" fill="#73874b" />
    <path d="M494 352L545 328 572 327 494 365Z" fill="#687c38" />
    <path d="M494 365L572 327V402L494 437Z" fill="#846b6d" />
    <path d="M494 395L572 402 494 437Z" fill="#776162" opacity=".7" />
    {/* edges */}
    <g fill="none" stroke="#4c4650" strokeWidth=".8">
      <path d="M192 408V244L269 210 572 240V402L494 437 192 408M269 210V372L192 408M269 372L572 402" opacity=".6" />
      <path d="M188 272L269 237 576 266M192 334L269 298 572 327" opacity=".5" />
      <path d="M494 277L572 240M497 302L576 266M494 309L572 280M494 320L572 287M494 365L572 327" stroke="#25242c" strokeWidth="1" />
    </g>
    <g fill="none" stroke="#c4cce4" strokeWidth=".8" strokeDasharray="7 3" opacity=".6">
      <path d="M202 243L279 214 550 241 480 273M570 247V262M201 288L268 256M196 330L268 300M196 404L270 376M480 362L566 325M480 434L566 398M566 338V394M497 370L569 335M570 293V320M275 380V345L450 362" />
    </g>
    <rect x="220" y="231" width="2.500" height="138" fill="#55484a" opacity=".65" />
    <rect x="391" y="300" width="2" height="100" fill="#a05050" opacity=".4" />
    {/* building */}
    <g stroke="#56706e" strokeWidth=".6">
      <path d="M304 212L330 202Q342 196 355 202L415 209 380 222 327 216Z" fill="#8eb5b2" fillOpacity=".8" />
      <path d="M304 212L327 215V258L304 256Z" fill="#6d8088" fillOpacity=".35" />
      <path d="M330 202V245H355V202" fill="#7fa5a6" fillOpacity=".5" />
      <ellipse cx="342" cy="201" rx="13" ry="2.500" fill="#94b8b4" />
      <path d="M327 215H380V236L415 231V209M304 234L330 224 355 226 415 231 380 244 327 237" fill="#7fa5a6" fillOpacity=".4" stroke="none" />
    </g>
    <path d="M375 208h4v42h-4ZM390 211h4v36h-4ZM400 208h4v34h-4Z" fill="#93c4c4" opacity=".6" />
    {Object.keys(vectorColors).map((key) => (
      <path key={key} d={vectors[key]} stroke={vectorColors[key]} strokeWidth={key === "faint" ? 0.8 : key === "yellow" || key === "core" ? 1.2 : 1} fill="none" />
    ))}
    <path d="M304 212L327 214V258L304 256ZM304 234L327 236M380 220L415 209M392 239L415 231" fill="none" stroke="#222" strokeWidth=".9" />
    {nodes.map(([x, y]) => <circle key={`${x}-${y}`} cx={x} cy={y} r="1.100" fill="#e81818" />)}
    {corners.map(([x, y]) => <circle key={`${x}-${y}`} cx={x} cy={y} r="1.200" fill="#e018e0" />)}
    <path d="M345 296h3v2h-3ZM348 324h3v2h-3ZM350 381h3v2h-3Z" fill="#801888" />
    {/* orientation cube */}
    <g stroke="#222" strokeWidth=".8" strokeLinejoin="round">
      <path d="M683 116L702 107.500 745 111 726 119.500Z" fill="#b8b9bc" />
      <path d="M683 116L726 119.500 725 165 683.500 161.500Z" fill="#dcdcdd" />
      <path d="M726 119.500L745 111 744 156 725 165Z" fill="#b5b5b7" />
      <path d="M700 113L713 110.500 728 112 719 115.500Z" fill="#a6a9b2" stroke="none" />
      <g fill="none" strokeWidth="1.200">
        <path d="M693 117L712 108.500M714 118.500L733 110M688 114L731 117.500L730.500 162M696 110L740 113.500 739 158.500" />
        <path d="M693 117V162.500M714.500 118.500V164M683 127L725.500 131.500 745 122M683 151L725 155 744 146" />
      </g>
    </g>
    <text x="698" y="146" fontSize="10" fontWeight="600" fill="#78dc78">+Y</text>
    <text x="730" y="143" fontSize="8" fontWeight="600" fill="#e08080">+X</text>
  </Scene>
);

/* ---------- legend data ---------- */

const bounds = ["7.9", "1.5", "-4.8", "-11.2", "-17.6", "-24.0", "-30.4", "-36.8", "-43.2", "-49.6", "-56.0", "-62.4"];
const bands: [string, string][] = [
  ["#be0000", "0.39 %"], ["#ff0000", "17.53 %"], ["#ffaa00", "32.05 %"], ["#cdcd00", "21.96 %"], ["#ffff00", "16.88 %"],
  ["#00ff00", "7.89 %"], ["#00e68c", "2.32 %"], ["#00f5f5", "0.60 %"], ["#0096ff", "0.24 %"], ["#0000ff", "0.06 %"], ["#0000a0", "0.08 %"],
];

const menus = ["Datei", "Bearbeiten", "Ansicht", "Einfügen", "Zuordnen", "Berechnen", "Ergebnisse", "Extras", "Optionen", "Fenster", "CAD-BIM", "Hilfe"];

const ControlPanel = () => (
  <Floating>
    <FloatHead>Steuerpanel<CloseBox aria-label="Schließen">×</CloseBox></FloatHead>
    <FloatCaption>
      Volumenkörper | Spannungen | Hauptspannungen<br />σ123 [kN/m<sup>2</sup>]
    </FloatCaption>
    <Legend>
      <Bounds>{bounds.map((b) => <li key={b}>{b}</li>)}</Bounds>
      <Bands>{bands.map(([c]) => <Band key={c} $color={c} />)}</Bands>
      <Shares>{bands.map(([c, s]) => <li key={c}>{s}</li>)}</Shares>
      <Sliders>
        <Range type="range" aria-label="Obere Grenze" defaultValue="100" />
        <Range type="range" aria-label="Untere Grenze" defaultValue="0" />
      </Sliders>
    </Legend>
    <FloatTools>
      <FloatTool aria-label="Archiv"><Icon name="archive" size={12} /></FloatTool>
      <FloatTool $framed aria-label="Skala"><Icon name="gauges" size={12} /></FloatTool>
    </FloatTools>
    <FloatTabs>
      <Tab $active aria-label="Farbskala"><Icon name="legendCube" size={12} /></Tab>
      <Tab aria-label="Faktoren"><Icon name="scale" size={12} /></Tab>
      <Tab aria-label="Filter"><Icon name="bars" size={12} /></Tab>
      <Tab aria-label="Auswahl"><Icon name="probe" size={12} /></Tab>
    </FloatTabs>
  </Floating>
);

export default function App() {
  return (
    <Window>
      <GlobalStyle />
      <TitleBar>
        <Icon name="logo" size={12} />
        <Title>Dlubal RFEM | 6.02.0014 | Webinar_GA-1_all-updated_NO-results (1).rf6</Title>
        <CaptionButton aria-label="Minimieren"><svg width="8" height="8"><path d="M1 4.500h6" stroke="#333" /></svg></CaptionButton>
        <CaptionButton aria-label="Maximieren"><svg width="8" height="8"><path d="M1.500 1.500h5v5h-5Z" stroke="#333" fill="none" /></svg></CaptionButton>
        <CaptionButton aria-label="Schließen"><svg width="8" height="8"><path d="M1 1l6 6M7 1L1 7" stroke="#333" /></svg></CaptionButton>
      </TitleBar>
      <MenuBar>
        <svg width="11" height="10" viewBox="0 0 11 10" aria-hidden="true">
          <path d="M0 1h11v8H0Z" fill="#1c3a7c" /><path d="M0 4h11M0 6.500h11M4 1v3M7 4v5" stroke="#dfe8f6" strokeWidth=".8" />
        </svg>
        {menus.map((m) => <MenuLink key={m}>{m}</MenuLink>)}
      </MenuBar>
      <ToolBar>
        <Tools spec="newModel open dlubal cloud archive save print v newDoc doc | undo v redo v | panel* table legend* console script list : selA selB selC selD selE :" />
        <ComboBox $width={136}>
          <Swatch $color="#c4fafa" />
          <Select aria-label="Koordinatensystem"><option>1 - Global XYZ</option></Select>
          <Chevron dir="down" />
        </ComboBox>
        <Tools spec="csys | gridHand snap planeA* planeB planeC | move rotate mirror erase camera" />
      </ToolBar>
      <ToolBar>
        <Tools spec="node v line member v poly v | support support2 support3 | dim v dimX | surf v solid v opening v joint v setBox | load loadA loadB loadC loadD v loadE v : find wire wireEdit | axX axY axZ axMX v edit v | block v plate v dimGray v beam v _ : chart v" />
        <More aria-label="Weitere">»</More>
      </ToolBar>
      <ToolBar>
        <Tools spec="caseNew caseAll" />
        <ComboBox $width={184}>
          <Tag>G Qs</Tag>
          <Swatch $color="#70b400" />
          <CaseName>EK1</CaseName>
          <Select aria-label="Lastfall"><option>-LF5/p + LK2/p</option></Select>
          <Chevron dir="down" />
        </ComboBox>
        <StepButton aria-label="Zurück"><Caret dir="left" /></StepButton>
        <StepButton $shade aria-label="Weiter"><Caret dir="right" /></StepButton>
        <Tools spec="filterX v eyeA eyeB eyeC eyeD eyeGrid v eyeWedge* xWedge | winWedge grid3 v : filterWin | frame film | uCurve rainbow cube* plus section | diagA diagB diagC diagD diagE diagF | cube v" />
      </ToolBar>
      <Body>
        <Navigator>
          <PanelHead>
            <PanelTitle>Navigator - Ergebnisse</PanelTitle>
            <PlainButton aria-label="Lösen"><svg width="7" height="7"><path d="M2.500 .5h4v3h-4ZM.5 2.500h4v4h-4Z" fill="#d6e5f4" stroke="#222" /></svg></PlainButton>
            <PlainButton aria-label="Schließen"><svg width="6" height="6"><path d="M.5 .5l5 5M5.500 .5l-5 5" stroke="#222" strokeWidth="1.300" /></svg></PlainButton>
          </PanelHead>
          <CaseBar>
            <CaseBox>
              <Icon name="image" size={12} />
              <Select aria-label="Analyse"><option>Statische Analyse</option></Select>
              <Chevron dir="down" color="#aaa" />
            </CaseBox>
            <StepButton $shade aria-label="Zurück"><Caret dir="left" color="#444" /></StepButton>
            <StepButton $shade aria-label="Weiter"><Caret dir="right" color="#444" /></StepButton>
          </CaseBar>
          <Tree><Rows rows={resultRows} /></Tree>
          <LowerPane>
            <LowerTree><Rows rows={displayRows} /></LowerTree>
            <ScrollBar><PlainButton aria-label="Hoch"><Chevron dir="up" /></PlainButton><ScrollThumb /><PlainButton aria-label="Runter"><Chevron dir="down" /></PlainButton></ScrollBar>
          </LowerPane>
          <TabStrip>
            <Tab aria-label="Daten"><Icon name="folder" size={12} /></Tab>
            <Tab aria-label="Zeigen"><Icon name="eye" size={12} /></Tab>
            <Tab aria-label="Ansichten"><Icon name="video" size={12} /></Tab>
            <Tab $active aria-label="Ergebnisse"><Icon name="wedge" size={12} /></Tab>
          </TabStrip>
        </Navigator>
        <View>
          <Model />
          <Overlay>
            <p>Clippingebenenmodus</p>
            <p>EK1 - -LF5/p + LK2/p</p>
            <p>Statische Analyse</p>
            <p>Hauptspannungen σ<sub>123</sub> [kN/m<sup>2</sup>]</p>
          </Overlay>
          <Overlay $bottom><p>max σ<sub>123</sub> : 7.9 | min σ<sub>123</sub> : -62.4 kN/m<sup>2</sup></p></Overlay>
          <ControlPanel />
        </View>
      </Body>
      <StatusBar>
        <SnapCell><Snap $on>FANG</Snap><Snap>RASTER</Snap><Snap>LRASTER</Snap><Snap $on>OFANG</Snap></SnapCell>
        <StatusCell />
        <StatusCell>KS: Global XYZ</StatusCell>
        <StatusCell>Ebene: XY</StatusCell>
        <StatusCell /><StatusCell /><StatusCell /><StatusCell />
      </StatusBar>
    </Window>
  );
}
